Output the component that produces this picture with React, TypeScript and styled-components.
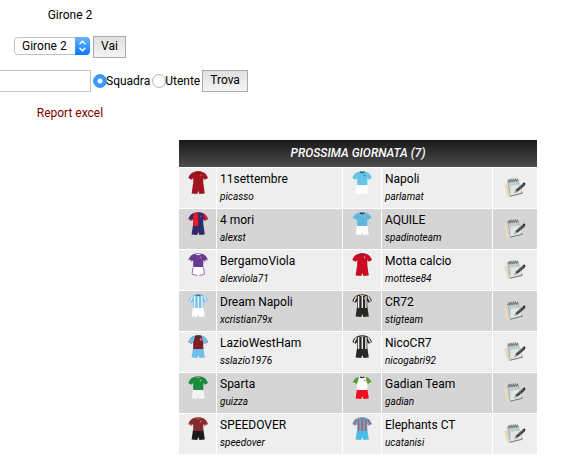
import React, { useState } from "react";
import styled, { createGlobalStyle } from "styled-components";

const Global = createGlobalStyle`
  html { background: #fff; overflow-x: hidden; }
  body {
    margin: 0;
    color: #000;
    font: 12px/16px Roboto, "Liberation Sans", sans-serif;
  }
`;

const Page = styled.main`
  padding: 7px 37px 15px 0;
`;

const Filters = styled.section`
  display: flex;
  flex-direction: column;
  align-items: center;
  width: fit-content;
  margin-left: -108px;
`;

const GroupTitle = styled.h1`
  margin: 0 0 13px;
  font-size: 12px;
  font-weight: 400;
`;

const GroupForm = styled.form`
  display: flex;
  align-items: flex-start;
  gap: 3px;
  margin-bottom: 12px;
`;

const SearchForm = styled.form`
  display: flex;
  align-items: center;
  margin-bottom: 13px;
`;

const Button = styled.button`
  height: 22px;
  padding: 0 7px 2px;
  border: 1px solid #aaa;
  border-radius: 0;
  background: linear-gradient(#e0e0e0, #f4f4f4);
  color: #000;
  font: inherit;
`;

const SelectBox = styled.span`
  position: relative;
  display: flex;
  margin-top: 1px;
`;

const Select = styled.select`
  appearance: none;
  width: 76px;
  height: 18px;
  padding: 0 16px 0 7px;
  border: 1px solid #c3c3c3;
  border-radius: 4px;
  background: #fff;
  color: #000;
  font: 12px/16px Roboto, "Liberation Sans", sans-serif;
`;

const Arrows = styled.svg`
  position: absolute;
  top: 0;
  right: 0;
  border-radius: 0 4px 4px 0;
  background: linear-gradient(#6cb3fa, #067bff);
  pointer-events: none;
`;

const TextInput = styled.input`
  box-sizing: border-box;
  width: 199px;
  height: 22px;
  margin-right: 2px;
  padding: 0 4px;
  border: 1px solid #c4c4c4;
  background: #fff;
  font: inherit;
`;

const RadioLabel = styled.label`
  display: flex;
  align-items: center;
  margin-right: 2px;
`;

const Radio = styled.input`
  appearance: none;
  box-sizing: border-box;
  width: 14px;
  height: 14px;
  margin: 0 -1px 0 0;
  border: 1px solid #b4b4b4;
  border-radius: 50%;
  background: #fff;
  &:checked {
    border-color: #3b99fc;
    background: radial-gradient(circle, #fff 0 2px, #3b99fc 3px);
  }
`;

const ReportLink = styled.a`
  color: #800000;
  text-decoration: none;
`;

const Fixtures = styled.section`
  margin: 18px 0 0 178px;
`;

const Table = styled.table`
  width: 100%;
  table-layout: fixed;
  border-spacing: 1px;
`;

const Col = styled.col<{ $width?: number }>`
  width: ${(p) => (p.$width ? `${p.$width}px` : "auto")};
`;

const Heading = styled.th`
  height: 27px;
  padding: 0 0 2px;
  box-sizing: border-box;
  background: linear-gradient(#191919, #4c4c4c);
  color: #fff;
  font-size: 12px;
  font-style: italic;
  font-weight: 500;
`;

const Row = styled.tr`
  background: #eee;
  &:nth-child(even) { background: #d5d5d5; }
`;

const Cell = styled.td`
  height: 40px;
  padding: 0;
  text-align: center;
  vertical-align: middle;
`;

const KitCell = styled(Cell)`
  vertical-align: top;
`;

const KitIcon = styled.svg`
  display: block;
  margin: 3px auto 0;
`;

const TeamCell = styled(Cell)`
  padding-left: 3px;
  text-align: left;
`;

const TeamName = styled.div`
  margin-bottom: 2px;
`;

const Owner = styled.div`
  font-size: 10px;
  font-style: italic;
`;

const NoteLink = styled.a`
  display: inline-flex;
  vertical-align: middle;
`;

interface KitStyle {
  shirt: string;
  shorts: string;
  sleeves?: string;
  cuffs?: string;
  collar?: string;
  stripes?: string;
  half?: string;
  crest?: string;
  hem?: string;
}

const SHIRT = "M6 1 8.5 .3H12L14.5 1C17 1.4 18.7 4 20 7L16.8 8.8 15.3 7V14H5.2V7L3.5 8.8 .3 7C1.6 4 3.3 1.5 6 1Z";
const SHORTS = "M5 13H15.4L16.8 22.4 11.4 23 10.3 20 9.2 23 3.6 22.4Z";

function Kit({ kit, team }: { kit: KitStyle; team: string }) {
  return (
    <KitIcon width="20" height="23" viewBox="0 0 20 23" role="img" aria-label={team}>
      <path d={SHORTS} fill={kit.shorts} />
      <path d={SHIRT} fill={kit.shirt} />
      {kit.sleeves && (
        <path d="M6 1C3.3 1.5 1.6 4 .3 7L3.5 8.8 5.7 6.5 7 1ZM14.5 1C17 1.4 18.7 4 20 7L16.8 8.8 14.8 6.5 13.5 1Z" fill={kit.sleeves} />
      )}
      {kit.half && (
        <>
          <path d="M6 1 10.2 .6V14H5.2V4Z" fill={kit.half} />
          <path d="M15.5 1.5C17.4 2.4 18.7 4 20 7L18 8 15.5 4Z" fill={kit.half} />
        </>
      )}
      {kit.stripes && (
        <path d="M6.6 2V14M10.3 2V14M13.9 2V14M4.5 2.5 2 7.5M16 2.5 18.4 7.5" fill="none" stroke={kit.stripes} strokeWidth="1.4" />
      )}
      {kit.cuffs && <path d="M.8 6.8 3.5 8.3M19.5 6.8 16.8 8.3" stroke={kit.cuffs} strokeWidth="1.2" />}
      {kit.collar && <path d="M8 .8Q10.2 2.5 12.5 .8" fill="none" stroke={kit.collar} strokeWidth="1.3" />}
      {kit.crest && <circle cx="12.6" cy="4.4" r=".9" fill={kit.crest} />}
      {kit.hem && <path d="M4 21.5 9.2 22.4M11.4 22.4 16.5 21.5M5 14.5 4 21M15.5 14.5 16.4 21" fill="none" stroke={kit.hem} strokeWidth=".9" />}
    </KitIcon>
  );
}

function NoteIcon() {
  return (
    <svg width="22" height="20" viewBox="1 1 23 20" aria-hidden="true">
      <path d="M1 8 8 4 13 18 5 21Z" fill="#ecdcc5" />
      <path d="M3.5 7.5 7 20" stroke="#dcc7aa" strokeWidth=".6" />
      <path d="M5 4 15.5 2.5 20 16.5 7.5 19.5Z" fill="#c0ccd0" stroke="#8f9899" strokeWidth=".6" />
      <path d="M8 9 18 7 20 16.5 7.5 19.5Z" fill="#e7edec" opacity=".8" />
      <path d="M7.5 19.5 20 16.5 19.5 15" fill="none" stroke="#70797a" />
      <path d="M5 5 6.2 1.8 7.3 5 8.4 1.4 9.5 4.8 10.7 1.2 11.7 4.5 13 1 13.8 4.3 15.2 1.4 15.7 4" fill="none" stroke="#62696b" strokeWidth=".8" />
      <path d="M12 16 13.2 12.8 20.5 6.2 22.8 8.3 15 15Z" fill="#3c4146" />
      <path d="M12 16 13.2 12.8 15 15Z" fill="#b89c87" />
      <path d="M14 13 20.8 7" stroke="#858c90" strokeWidth=".7" />
      <path d="M20.5 6.2 22.4 5 23.4 6.6 22.8 8.3Z" fill="#25292c" />
      <path d="M16.8 9.6 19.3 11.7" stroke="#9a654b" strokeWidth=".8" />
    </svg>
  );
}

interface Team {
  name: string;
  owner: string;
  kit: KitStyle;
}

const MATCHES: [Team, Team][] = [
  [
    { name: "11settembre", owner: "picasso", kit: { shirt: "#a11420", shorts: "#a11420", crest: "#c45a30", collar: "#7c1018" } },
    { name: "Napoli", owner: "parlamat", kit: { shirt: "#68c5e8", shorts: "#fff", collar: "#31566a", crest: "#347ba6" } },
  ],
  [
    { name: "4 mori", owner: "alexst", kit: { shirt: "#2f2a68", shorts: "#2f2a68", half: "#ee1728", cuffs: "#e33147", crest: "#ba3546" } },
    { name: "AQUILE", owner: "spadinoteam", kit: { shirt: "#5db7df", shorts: "#fff", cuffs: "#def1f5", collar: "#303c44", crest: "#d5bd55" } },
  ],
  [
    { name: "BergamoViola", owner: "alexviola71", kit: { shirt: "#673b91", shorts: "#fff", cuffs: "#e2d7e8", collar: "#eee", crest: "#c46e86", hem: "#805ba0" } },
    { name: "Motta calcio", owner: "mottese84", kit: { shirt: "#c90c22", shorts: "#c90c22", collar: "#56313c", crest: "#e78c8b" } },
  ],
  [
    { name: "Dream Napoli", owner: "xcristian79x", kit: { shirt: "#75bee5", shorts: "#fff", stripes: "#e9f5fa", collar: "#586c79" } },
    { name: "CR72", owner: "stigteam", kit: { shirt: "#292824", shorts: "#292824", stripes: "#eee", collar: "#d4b27a", crest: "#c7a764" } },
  ],
  [
    { name: "LazioWestHam", owner: "sslazio1976", kit: { shirt: "#821c26", shorts: "#6dbee8", sleeves: "#6dbee8", collar: "#283b4d", crest: "#dfad91" } },
    { name: "NicoCR7", owner: "nicogabri92", kit: { shirt: "#292824", shorts: "#292824", stripes: "#eee", collar: "#85877d" } },
  ],
  [
    { name: "Sparta", owner: "guizza", kit: { shirt: "#198b42", shorts: "#f4f4f4", collar: "#98aa52", crest: "#b8bd67" } },
    { name: "Gadian Team", owner: "gadian", kit: { shirt: "#fff", shorts: "#f20d20", sleeves: "#65993d", cuffs: "#f4eee9", collar: "#29292a", crest: "#b2a079" } },
  ],
  [
    { name: "SPEEDOVER", owner: "speedover", kit: { shirt: "#842a30", shorts: "#1d1c1d", cuffs: "#bd793e", collar: "#b45e37", crest: "#c17c48" } },
    { name: "Elephants CT", owner: "ucatanisi", kit: { shirt: "#57add5", shorts: "#4abce5", stripes: "#d54d58", collar: "#7a8797" } },
  ],
];

function TeamCells({ team }: { team: Team }) {
  return (
    <>
      <KitCell>
        <Kit kit={team.kit} team={team.name} />
      </KitCell>
      <TeamCell>
        <TeamName>{team.name}</TeamName>
        <Owner>{team.owner}</Owner>
      </TeamCell>
    </>
  );
}

export default function App() {
  const [searchBy, setSearchBy] = useState("squadra");

  return (
    <Page>
      <Global />
      <Filters>
        <GroupTitle>Girone 2</GroupTitle>
        <GroupForm onSubmit={(e) => e.preventDefault()}>
          <SelectBox>
            <Select aria-label="Girone" defaultValue="2">
              <option value="1">Girone 1</option>
              <option value="2">Girone 2</option>
            </Select>
            <Arrows width="15" height="18" viewBox="0 0 15 18" aria-hidden="true">
              <path d="M4.5 7.2 7.5 4.2 10.5 7.2M4.5 10.8 7.5 13.8 10.5 10.8" fill="none" stroke="#fff" strokeWidth="1.4" />
            </Arrows>
          </SelectBox>
          <Button type="submit">Vai</Button>
        </GroupForm>
        <SearchForm onSubmit={(e) => e.preventDefault()}>
          <TextInput type="text" aria-label="Cerca" />
          <RadioLabel>
            <Radio type="radio" name="tipo" checked={searchBy === "squadra"} onChange={() => setSearchBy("squadra")} />
            Squadra
          </RadioLabel>
          <RadioLabel>
            <Radio type="radio" name="tipo" checked={searchBy === "utente"} onChange={() => setSearchBy("utente")} />
            Utente
          </RadioLabel>
          <Button type="submit">Trova</Button>
        </SearchForm>
        <ReportLink href="#report">Report excel</ReportLink>
      </Filters>
      <Fixtures>
        <Table>
          <colgroup>
            <Col $width={37} />
            <Col $width={125} />
            <Col $width={38} />
            <Col />
            <Col $width={44} />
          </colgroup>
          <thead>
            <tr>
              <Heading colSpan={5}>PROSSIMA GIORNATA (7)</Heading>
            </tr>
          </thead>
          <tbody>
            {MATCHES.map(([home, away]) => (
              <Row key={home.name}>
                <TeamCells team={home} />
                <TeamCells team={away} />
                <Cell>
                  <NoteLink href="#partita" aria-label={`${home.name} - ${away.name}`}>
                    <NoteIcon />
                  </NoteLink>
                </Cell>
              </Row>
            ))}
          </tbody>
        </Table>
      </Fixtures>
    </Page>
  );
}
